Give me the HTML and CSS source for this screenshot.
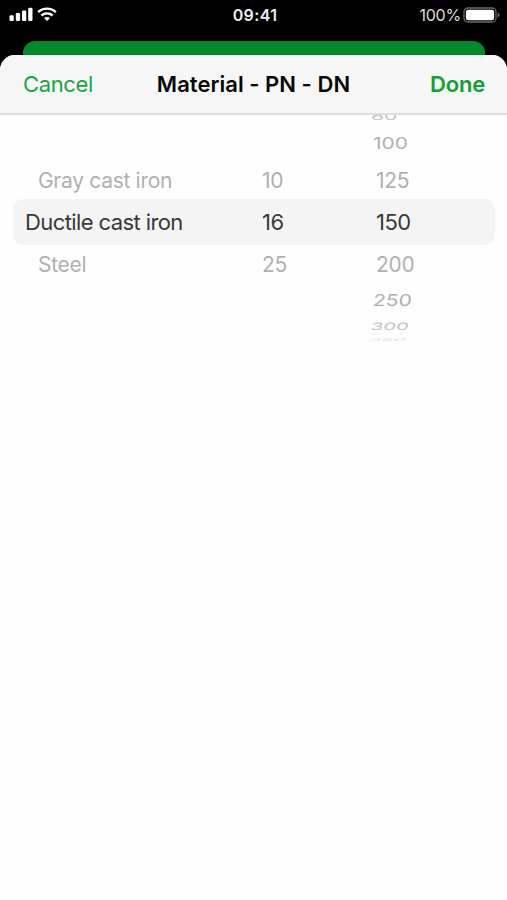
FILE: index.html
```html
<!DOCTYPE html>
<html lang="en">
<head>
<meta charset="utf-8">
<title>Material - PN - DN</title>
<link rel="stylesheet" href="styles.css">
</head>
<body>
<div class="screen">
  <header class="status">
    <div class="status-left">
      <svg class="signal" width="24" height="15" viewBox="0 0 24 15" fill="#fff"><rect x="0.5" y="8.3" width="4.3" height="5.7" rx="1.2"/><rect x="6.8" y="6" width="4.3" height="8" rx="1.2"/><rect x="13" y="3.6" width="4.3" height="10.4" rx="1.2"/><rect x="19.2" y="0.7" width="4.3" height="13.3" rx="1.2"/></svg>
      <svg class="wifi" width="20" height="15" viewBox="0 0 20 15" fill="none" stroke="#fff" stroke-width="2.4"><path d="M1.2 5.1C6.1 .5 13.9 .5 18.8 5.1"/><path d="M4.4 8.5C7.5 5.6 12.5 5.6 15.6 8.5"/><path d="M10 14L7 11C8.7 9.5 11.3 9.5 13 11Z" fill="#fff" stroke="none"/></svg>
    </div>
    <span class="clock">09:41</span>
    <div class="status-right">
      <span class="percent">100%</span>
      <svg width="38" height="16" viewBox="0 0 38 16"><rect x="1" y="1" width="32" height="14" rx="4" fill="none" stroke="#6b6b6b" stroke-width="1.3"/><rect x="2.9" y="2.8" width="28.2" height="10.4" rx="2.2" fill="#fff"/><path d="M34.6 5.5Q36.6 6.2 36.6 8T34.6 10.5Z" fill="#6b6b6b"/></svg>
    </div>
  </header>
  <div class="back-sheet"></div>
  <main class="sheet">
    <nav class="bar">
      <span class="cancel">Cancel</span>
      <h1>Material - PN - DN</h1>
      <span class="done">Done</span>
    </nav>
    <section class="picker">
      <div class="column material">
        <div class="row far"></div>
        <div class="row two"></div>
        <div class="row one"><span>Gray cast iron</span></div>
        <div class="row selected"><span>Ductile cast iron</span></div>
        <div class="row one"><span>Steel</span></div>
      </div>
      <div class="column pressure">
        <div class="row far"></div>
        <div class="row two"></div>
        <div class="row one"><span>10</span></div>
        <div class="row selected"><span>16</span></div>
        <div class="row one"><span>25</span></div>
      </div>
      <div class="column diameter">
        <div class="row far"><span>80</span></div>
        <div class="row two"><span>100</span></div>
        <div class="row one"><span>125</span></div>
        <div class="row selected"><span>150</span></div>
        <div class="row one"><span>200</span></div>
        <div class="row two below"><span>250</span></div>
        <div class="row far below"><span>300</span></div>
        <div class="row edge"><span>350</span></div>
      </div>
    </section>
  </main>
</div>
</body>
</html>
```
FILE: styles.css
```css
* { box-sizing: border-box; }
body { margin: 0; background: #000; font-family: Inter, "Liberation Sans", sans-serif; }
.screen { width: 507px; height: 900px; display: flex; flex-direction: column; overflow: hidden; background: #000; }
.status { height: 41px; flex: none; display: grid; grid-template-columns: 1fr auto 1fr; align-items: start; padding: 7px 6px 0 9px; color: #fff; }
.status-left, .status-right { display: flex; align-items: center; }
.status-left { gap: 4px; }
.status-right { justify-content: flex-end; gap: 2px; }
.clock { font-size: 16px; line-height: 16px; font-weight: 600; letter-spacing: .35px; color: #eee; }
.percent { font-size: 16px; line-height: 16px; letter-spacing: -.2px; color: #ddd; }
.back-sheet { height: 14px; flex: none; margin: 0 22px 0 23px; background: #048a2c; border-radius: 12px 12px 0 0; }
.sheet { flex: 1; background: #fefefe; border-radius: 15px 15px 0 0; overflow: hidden; }
.bar { height: 60px; display: grid; grid-template-columns: 1fr auto 1fr; align-items: center; padding: 0 23px; background: #f6f6f6; border-bottom: 2px solid #dfdfdf; font-size: 22px; white-space: nowrap; }
.bar h1 { margin: 0; font-size: 22px; font-weight: 600; letter-spacing: .03px; color: #080808; }
.cancel { color: #19a541; letter-spacing: -.35px; }
.done { justify-self: end; color: #109e38; font-weight: 600; letter-spacing: -.2px; margin-right: -1px; }
.picker { height: 232px; display: grid; grid-template-columns: 249px 114px 1fr; overflow: hidden; position: relative; }
.picker::before { content: ""; position: absolute; left: 13px; top: 84px; width: 482px; height: 46px; border-radius: 10px; background: #f4f4f4; }
.column { position: relative; margin-top: -5px; }
.row { display: flex; align-items: center; color: #b0b0b0; font-size: 21px; line-height: 24px; white-space: nowrap; }
.row span { transform-origin: left center; }
.far { height: 14px; padding-left: 8px; }
.two { height: 38px; padding: 1px 0 0 10px; }
.one { height: 36px; padding: 1px 0 0 13px; letter-spacing: -.3px; }
.selected { height: 48px; padding-left: 13px; color: #383838; font-size: 22px; letter-spacing: -.5px; }
.material .one { padding-left: 38px; }
.material .selected { padding-left: 25px; letter-spacing: -.6px; }
.two span { transform: scaleY(.78); }
.two.below { height: 36px; padding-top: 2px; }
.two.below span { transform: scaleY(.78) skewX(-5deg); }
.far span { transform: scaleY(.48); color: #c2c2c2; }
.far.below { height: 16px; padding-top: 1px; }
.far.below span { transform: scale(.96, .48) skewX(-8deg); }
.edge { height: 12px; padding-left: 6px; }
.edge span { transform: scale(.95, .18) skewX(-15deg); color: #dedede; }
```
